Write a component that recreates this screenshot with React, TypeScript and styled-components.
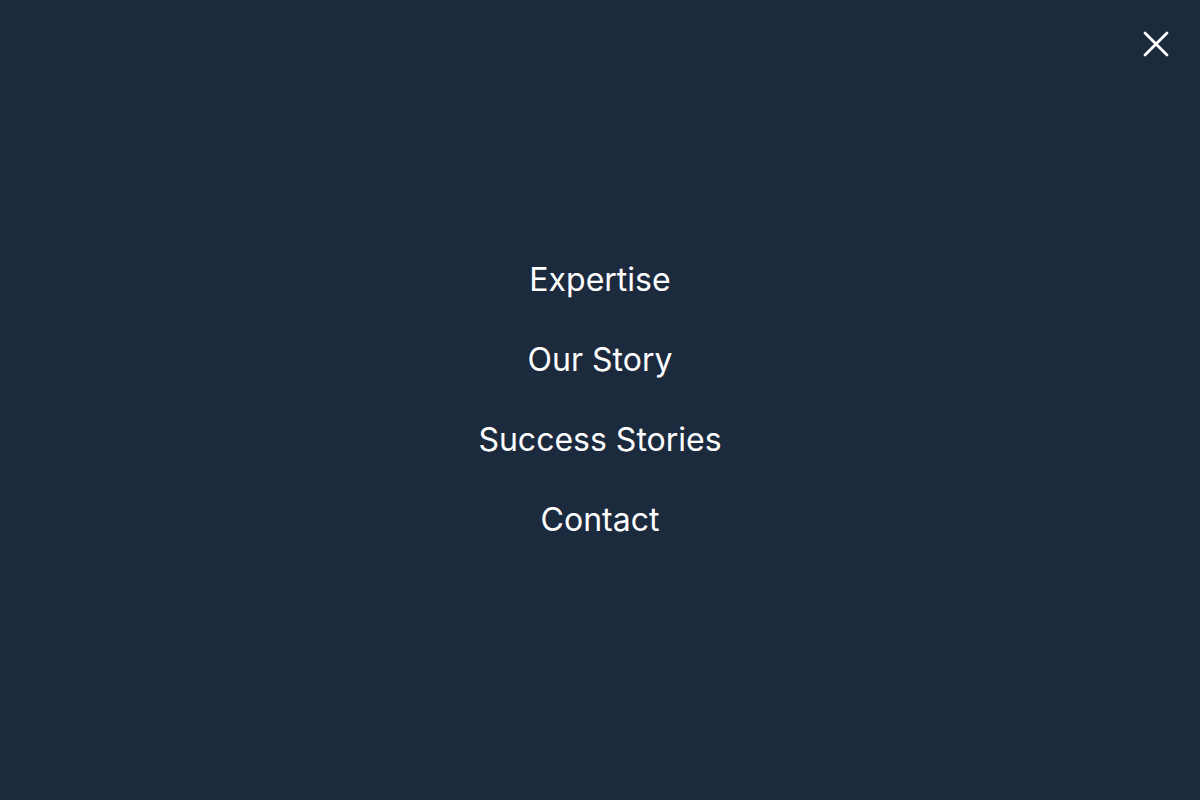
import React from "react";
import styled, { createGlobalStyle } from "styled-components";

const Global = createGlobalStyle`
  html, body { margin: 0; padding: 0; background: #1c2a3e; }
  body { font-family: Inter, "Noto Sans", sans-serif; }
`;

const Overlay = styled.div`
  width: 100vw;
  height: 100vh;
  background: #1c2a3e;
  display: flex;
  align-items: center;
  justify-content: center;
  position: relative;
`;

const Close = styled.button`
  position: absolute;
  top: 22px;
  right: 22px;
  width: 44px;
  height: 44px;
  padding: 0;
  border: none;
  background: transparent;
  color: #fff;
  display: flex;
  align-items: center;
  justify-content: center;
  cursor: pointer;
`;

const Nav = styled.nav`
  display: flex;
  flex-direction: column;
  align-items: center;
  gap: 42px;
`;

const Link = styled.a`
  font-family: Inter, sans-serif;
  font-size: 32px;
  line-height: 38px;
  color: #fff;
  text-decoration: none;
`;

export default function App() {
  return (
    <>
      <Global />
      <Overlay>
        <Close aria-label="Close">
          <svg width="26" height="26" viewBox="0 0 26 26" fill="none" stroke="currentColor" strokeWidth="2.8" strokeLinecap="round">
            <path d="M2 2 L24 24 M24 2 L2 24" />
          </svg>
        </Close>
        <Nav>
          <Link href="#">Expertise</Link>
          <Link href="#">Our Story</Link>
          <Link href="#">Success Stories</Link>
          <Link href="#">Contact</Link>
        </Nav>
      </Overlay>
    </>
  );
}
